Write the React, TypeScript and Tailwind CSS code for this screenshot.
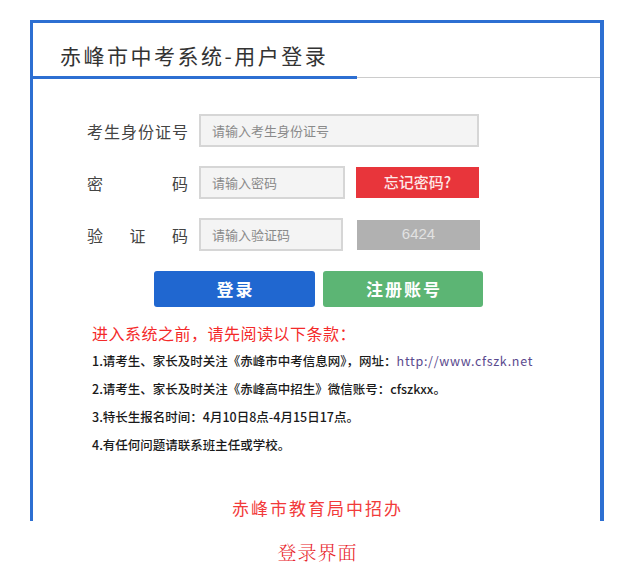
import React from 'react'

const blue = 'border-[#2d6fd2]'

function Label({ text }: { text: string }) {
  return (
    <div className="flex w-[101px] justify-between text-[16px] leading-[20px] text-[#444]">
      {text.split('').map((c, i) => (
        <span key={i}>{c}</span>
      ))}
    </div>
  )
}

function App() {
  return (
    <div className="min-h-[571px] w-[631px] bg-white pt-[20px] font-['Noto_Sans_CJK_SC','Noto_Sans',sans-serif]">
      <div className={`ml-[30px] w-[574px] border-t-[3px] border-l-[3px] border-r-[4px] ${blue} pb-px`}>
        <div className="border-b border-[#cccccc]">
          <h1 className={`-mb-[2px] w-[324px] border-b-[3px] ${blue} pl-[27px] pt-[18px] pb-[7px] text-[21px] leading-[28px] tracking-[2.5px] text-[#333]`}>
            赤峰市中考系统-用户登录
          </h1>
        </div>

        <div className="pl-[54px] pt-[36px]">
          <div className="flex flex-col gap-[19px]">
            <div className="flex h-[33px] items-center gap-[11px]">
              <Label text="考生身份证号" />
              <input
                className="h-[33px] w-[280px] border-2 border-[#d6d6d6] bg-[#f4f4f4] px-[11px] text-[13px] outline-none placeholder:text-[#8a8a8a]"
                placeholder="请输入考生身份证号"
              />
            </div>
            <div className="flex h-[33px] items-center gap-[11px]">
              <Label text="密码" />
              <input
                className="h-[33px] w-[146px] border-2 border-[#d6d6d6] bg-[#f4f4f4] px-[11px] text-[13px] outline-none placeholder:text-[#8a8a8a]"
                placeholder="请输入密码"
              />
              <button className="h-[31px] w-[123px] bg-[#e8353b] text-[15px] font-medium text-[#fde8e8]">
                忘记密码?
              </button>
            </div>
            <div className="flex h-[33px] items-center gap-[11px]">
              <Label text="验证码" />
              <input
                className="h-[33px] w-[144px] border-2 border-[#d6d6d6] bg-[#f4f4f4] px-[11px] text-[13px] outline-none placeholder:text-[#8a8a8a]"
                placeholder="请输入验证码"
              />
              <div className="ml-[3px] flex h-[30px] w-[123px] items-center justify-center bg-[#b1b1b1] font-['Liberation_Sans',sans-serif] text-[15px] text-[#e2e2e2]">
                6424
              </div>
            </div>
          </div>

          <div className="ml-[67px] mt-[20px] flex gap-[8px]">
            <button className="h-[36px] w-[161px] rounded-[3px] bg-[#2067d0] pl-[2px] text-[17px] font-bold tracking-[2px] text-white">
              登录
            </button>
            <button className="h-[36px] w-[160px] rounded-[3px] bg-[#5cb574] pl-[2px] text-[17px] font-bold tracking-[2px] text-white">
              注册账号
            </button>
          </div>

          <div className="ml-[5px] mt-[12px]">
            <p className="text-[16px] leading-[28px] tracking-[0.5px] text-[#f42a2a]">
              进入系统之前，请先阅读以下条款：
            </p>
            <ul className="text-[12.5px] font-medium leading-[28px] text-[#1a1a1a]">
              <li>
                1.请考生、家长及时关注《赤峰市中考信息网》，网址：
                <span className="font-normal tracking-[0.7px] text-[#5a4a8e]">http://www.cfszk.net</span>
              </li>
              <li>2.请考生、家长及时关注《赤峰高中招生》微信账号：cfszkxx。</li>
              <li>3.特长生报名时间：4月10日8点-4月15日17点。</li>
              <li>4.有任何问题请联系班主任或学校。</li>
            </ul>
          </div>
        </div>

        <p className="mt-[37px] pl-[2px] text-center text-[17px] leading-[24px] tracking-[2px] text-[#f23a3a]">
          赤峰市教育局中招办
        </p>
      </div>

      <p className="ml-[30px] mt-[18px] w-[574px] pl-[1px] text-center font-['Noto_Serif_CJK_SC','Noto_Sans_CJK_SC',serif] text-[19px] font-light leading-[26px] tracking-[1px] text-[#e8262c]">
        登录界面
      </p>
    </div>
  )
}

export default App
